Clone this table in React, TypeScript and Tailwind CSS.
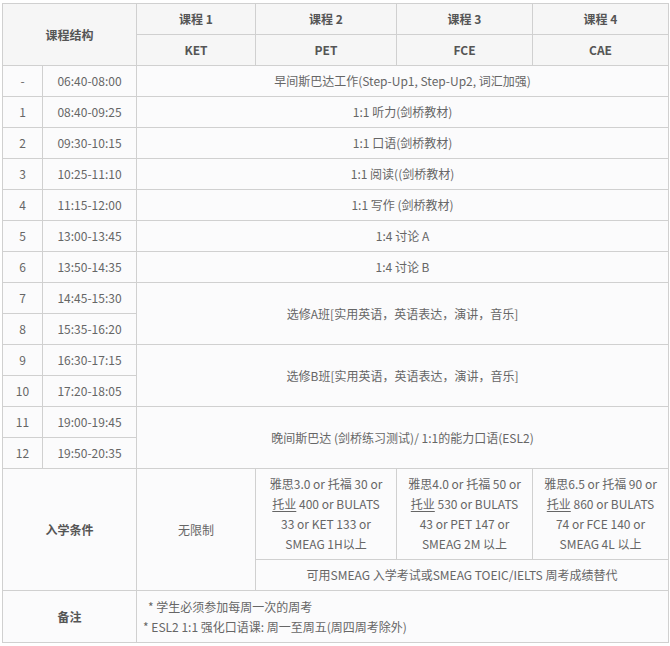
import React from "react";

const B = "border border-[#d0d0d0]";
const TD = `${B} bg-[#fbfbfc] text-center align-middle h-[31px] p-0`;
const TH = `${B} bg-[#f6f6f6] text-center align-middle font-bold text-[#555] h-[31px] p-0`;

const sessions: [string, string][] = [
  ["-", "06:40-08:00"],
  ["1", "08:40-09:25"],
  ["2", "09:30-10:15"],
  ["3", "10:25-11:10"],
  ["4", "11:15-12:00"],
  ["5", "13:00-13:45"],
  ["6", "13:50-14:35"],
  ["7", "14:45-15:30"],
  ["8", "15:35-16:20"],
  ["9", "16:30-17:15"],
  ["10", "17:20-18:05"],
  ["11", "19:00-19:45"],
  ["12", "19:50-20:35"],
];

const content: Record<number, { text: string; span: number }> = {
  0: { text: "早间斯巴达工作(Step-Up1, Step-Up2, 词汇加强)", span: 1 },
  1: { text: "1:1 听力(剑桥教材)", span: 1 },
  2: { text: "1:1 口语(剑桥教材)", span: 1 },
  3: { text: "1:1 阅读((剑桥教材)", span: 1 },
  4: { text: "1:1 写作 (剑桥教材)", span: 1 },
  5: { text: "1:4 讨论 A", span: 1 },
  6: { text: "1:4 讨论 B", span: 1 },
  7: { text: "选修A班[实用英语，英语表达，演讲，音乐]", span: 2 },
  9: { text: "选修B班[实用英语，英语表达，演讲，音乐]", span: 2 },
  11: { text: "晚间斯巴达 (剑桥练习测试)/ 1:1的能力口语(ESL2)", span: 2 },
};

function Req({ lines }: { lines: React.ReactNode[] }) {
  return (
    <div className="leading-[20px] py-[4px]">
      {lines.map((l, i) => (
        <div key={i}>{l}</div>
      ))}
    </div>
  );
}

const TY = <span className="underline underline-offset-2">托业</span>;

export default function App() {
  return (
    <div
      className="bg-white w-[670px] h-[646px] pt-[3px] pl-[2px]"
      style={{ fontFamily: '"Noto Sans CJK SC", "Liberation Sans", sans-serif' }}
    >
      <table className="table-fixed border-collapse w-[666px] text-[12px] text-[#666]">
        <colgroup>
          <col className="w-[40px]" />
          <col className="w-[94px]" />
          <col className="w-[119px]" />
          <col className="w-[141px]" />
          <col className="w-[136px]" />
          <col className="w-[136px]" />
        </colgroup>
        <tbody>
          <tr>
            <td className={TH} colSpan={2} rowSpan={2}>课程结构</td>
            <td className={TH}>课程 1</td>
            <td className={TH}>课程 2</td>
            <td className={TH}>课程 3</td>
            <td className={TH}>课程 4</td>
          </tr>
          <tr>
            <td className={TH}>KET</td>
            <td className={TH}>PET</td>
            <td className={TH}>FCE</td>
            <td className={TH}>CAE</td>
          </tr>
          {sessions.map(([n, t], i) => (
            <tr key={i}>
              <td className={TD}>{n}</td>
              <td className={TD}>{t}</td>
              {content[i] && (
                <td className={TD} colSpan={4} rowSpan={content[i].span}>
                  {content[i].text}
                </td>
              )}
            </tr>
          ))}
          <tr>
            <td className={`${TH} !bg-[#fbfbfc] h-[91px]`} colSpan={2} rowSpan={2}>入学条件</td>
            <td className={TD} rowSpan={2}>无限制</td>
            <td className={`${TD} h-[91px]`}>
              <Req lines={["雅思3.0 or 托福 30 or", <>{TY} 400 or BULATS</>, "33 or KET 133 or", "SMEAG 1H以上"]} />
            </td>
            <td className={`${TD} h-[91px]`}>
              <Req lines={["雅思4.0 or 托福 50 or", <>{TY} 530 or BULATS</>, "43 or PET 147 or", "SMEAG 2M 以上"]} />
            </td>
            <td className={`${TD} h-[91px]`}>
              <Req lines={["雅思6.5 or 托福 90 or", <>{TY} 860 or BULATS</>, "74 or FCE 140 or", "SMEAG 4L 以上"]} />
            </td>
          </tr>
          <tr>
            <td className={TD} colSpan={3}>可用SMEAG 入学考试或SMEAG TOEIC/IELTS 周考成绩替代</td>
          </tr>
          <tr>
            <td className={`${TH} !bg-[#fbfbfc] h-[52px]`} colSpan={2}>备注</td>
            <td className={`${TD} h-[52px] !text-left pl-[6px]`} colSpan={4}>
              <div className="leading-[20px] py-[4px]">
                <div className="pl-[5px]">* 学生必须参加每周一次的周考</div>
                <div>* ESL2 1:1 强化口语课: 周一至周五(周四周考除外)</div>
              </div>
            </td>
          </tr>
        </tbody>
      </table>
    </div>
  );
}
